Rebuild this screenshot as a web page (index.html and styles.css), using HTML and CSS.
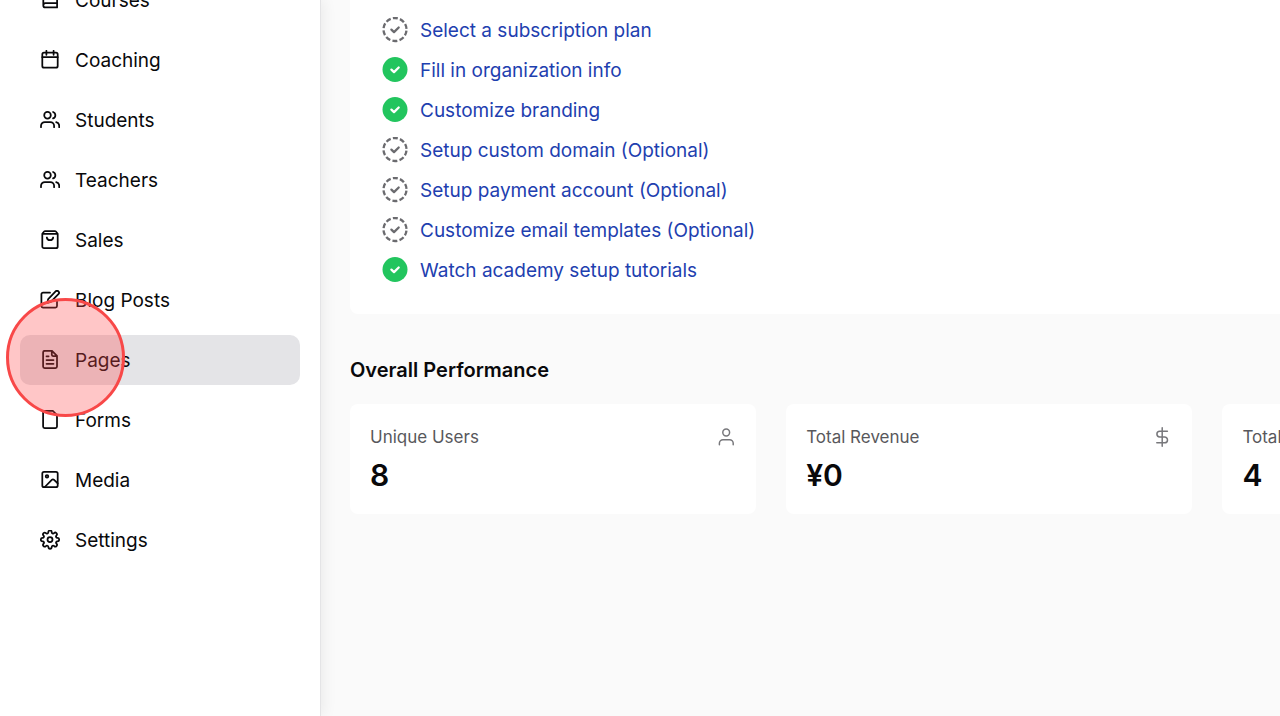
FILE: index.html
```html
<!DOCTYPE html>
<html lang="en">
<head>
<meta charset="utf-8">
<title>Dashboard</title>
<link rel="stylesheet" href="styles.css">
</head>
<body>
<svg class="defs" aria-hidden="true">
  <symbol id="users" viewBox="0 0 20 20"><circle cx="7.500" cy="5.200" r="3.300"/><path d="M1 17.200v-1.400a3.800 3.800 0 0 1 3.800-3.800h5.500a3.800 3.800 0 0 1 3.800 3.800v1.400M13.100 2a3.400 3.400 0 0 1 0 6.400M16.200 12.200c1.900.5 3 1.900 3 3.600v1.400"/></symbol>
  <symbol id="todo" viewBox="0 0 26 26"><circle class="dash" cx="13" cy="12.500" r="11.500"/><path d="M9.400 12.600l2.600 2.500 4.700-4.600"/></symbol>
  <symbol id="done" viewBox="0 0 26 26"><circle class="disc" cx="13" cy="12.500" r="12.500"/><path d="M9.400 12.600l2.600 2.500 4.700-4.600"/></symbol>
</svg>
<div class="app">
  <aside class="sidebar">
    <nav class="nav">
      <a class="nav-item" href="#"><svg class="icon" viewBox="0 0 20 20"><path d="M3.300 15.400V3.500A2 2 0 0 1 5.300 1.500h11.800V17.400H5.300a2 2 0 0 1-2-2 2.200 2.200 0 0 1 2-2.200h11.800"/></svg>Courses</a>
      <a class="nav-item" href="#"><svg class="icon" viewBox="0 0 20 20"><rect x="2.300" y="2.700" width="15.400" height="15" rx="1.700"/><path d="M2.300 7.200h15.400M6.400.8v4M13.600.8v4"/></svg>Coaching</a>
      <a class="nav-item" href="#"><svg class="icon"><use href="#users"/></svg>Students</a>
      <a class="nav-item" href="#"><svg class="icon"><use href="#users"/></svg>Teachers</a>
      <a class="nav-item" href="#"><svg class="icon" viewBox="0 0 20 20"><path d="M2.300 3.700L4.100 1.500a1.400 1.400 0 0 1 1-.5h9.800a1.400 1.400 0 0 1 1 .5l1.800 2.200v12.700a1.700 1.700 0 0 1-1.700 1.700H4a1.700 1.700 0 0 1-1.700-1.700zM2.300 3.900h15.400M6.800 7.500a3.250 3.250 0 0 0 6.400 0"/></svg>Sales</a>
      <a class="nav-item" href="#"><svg class="icon" viewBox="0 0 20 20"><path d="M10 2.700H3A1.600 1.600 0 0 0 1.400 4.300V16A1.600 1.600 0 0 0 3 17.600h12.400A1.600 1.600 0 0 0 17 16V10M15.600 1.400a1.950 1.950 0 0 1 2.800 2.800l-7.600 7.600-3.600 1 1-3.700z"/></svg>Blog Posts</a>
      <a class="nav-item nav-item-active" href="#" aria-current="page"><svg class="icon" viewBox="0 0 20 20"><path d="M12 .8H4.700A1.600 1.600 0 0 0 3.100 2.400V16.400A1.600 1.600 0 0 0 4.700 18h10.700A1.600 1.600 0 0 0 17 16.400V5.800zM11.800.8v4a1.200 1.200 0 0 0 1.200 1.200h4M6.500 6.300h2.100M6.500 10h7M6.500 13.800h7"/></svg>Pages<span class="click-marker"></span></a>
      <a class="nav-item" href="#"><svg class="icon" viewBox="0 0 20 20"><path d="M12.800.8H4.700A1.600 1.600 0 0 0 3.100 2.400V16.400A1.600 1.600 0 0 0 4.700 18h10.700A1.600 1.600 0 0 0 17 16.400V5z"/></svg>Forms</a>
      <a class="nav-item" href="#"><svg class="icon" viewBox="0 0 20 20"><rect x="2.300" y="1.900" width="15.400" height="15.200" rx="1.700"/><circle cx="7" cy="6.300" r="1.300"/><path d="M4.800 17l7-7.200a1.600 1.600 0 0 1 2.300 0l3.600 3.600"/></svg>Media</a>
      <a class="nav-item" href="#"><svg class="icon" viewBox="0 0 24 24"><g stroke-width="2.100"><circle cx="12" cy="11.500" r="3"/><path transform="translate(0 -.5)" d="M19.400 15a1.650 1.650 0 0 0 .33 1.820l.06.06a2 2 0 0 1-2.830 2.830l-.06-.06a1.650 1.650 0 0 0-1.820-.33 1.650 1.650 0 0 0-1 1.510V21a2 2 0 0 1-4 0v-.09A1.650 1.650 0 0 0 9 19.400a1.650 1.650 0 0 0-1.820.33l-.06.06a2 2 0 0 1-2.830-2.830l.06-.06a1.650 1.650 0 0 0 .33-1.820 1.650 1.650 0 0 0-1.510-1H3a2 2 0 0 1 0-4h.09A1.650 1.650 0 0 0 4.600 9a1.650 1.650 0 0 0-.33-1.820l-.06-.06a2 2 0 0 1 2.830-2.830l.06.06a1.650 1.650 0 0 0 1.820.33H9a1.650 1.650 0 0 0 1-1.510V3a2 2 0 0 1 4 0v.09a1.650 1.650 0 0 0 1 1.510 1.650 1.650 0 0 0 1.820-.33l.06-.06a2 2 0 0 1 2.830 2.830l-.06.06a1.650 1.650 0 0 0-.33 1.820V9a1.650 1.650 0 0 0 1.510 1H21a2 2 0 0 1 0 4h-.09a1.650 1.650 0 0 0-1.510 1z"/></g></svg>Settings</a>
    </nav>
  </aside>
  <main class="main">
    <section class="checklist">
      <a class="task" href="#"><svg class="task-icon"><use href="#todo"/></svg>Select a subscription plan</a>
      <a class="task" href="#"><svg class="task-icon task-done"><use href="#done"/></svg>Fill in organization info</a>
      <a class="task" href="#"><svg class="task-icon task-done"><use href="#done"/></svg>Customize branding</a>
      <a class="task" href="#"><svg class="task-icon"><use href="#todo"/></svg>Setup custom domain (Optional)</a>
      <a class="task" href="#"><svg class="task-icon"><use href="#todo"/></svg>Setup payment account (Optional)</a>
      <a class="task" href="#"><svg class="task-icon"><use href="#todo"/></svg>Customize email templates (Optional)</a>
      <a class="task" href="#"><svg class="task-icon task-done"><use href="#done"/></svg>Watch academy setup tutorials</a>
    </section>
    <h2 class="heading">Overall Performance</h2>
    <section class="stats">
      <article class="stat">
        <div class="stat-head">Unique Users<svg class="icon" viewBox="0 0 20 20"><circle cx="10.200" cy="5.500" r="3.400"/><path d="M3.400 17.700v-1.400a3.600 3.600 0 0 1 3.600-3.600h6.600a3.600 3.600 0 0 1 3.600 3.600v1.400"/></svg></div>
        <div class="stat-value">8</div>
      </article>
      <article class="stat">
        <div class="stat-head">Total Revenue<svg class="icon" viewBox="0 0 20 20"><path d="M10.200.8v18.400M15.400 4.200H7.800a2.900 2.900 0 0 0 0 5.800h4.800a2.900 2.900 0 0 1 0 5.800H4.800"/></svg></div>
        <div class="stat-value">¥0</div>
      </article>
      <article class="stat">
        <div class="stat-head">Total Sales</div>
        <div class="stat-value">4</div>
      </article>
    </section>
  </main>
</div>
</body>
</html>
```
FILE: styles.css
```css
* { box-sizing: border-box; }

body {
  margin: 0;
  font-family: Inter, "Liberation Sans", sans-serif;
  font-size: 19px;
  color: #09090b;
  background: #fafafa;
}

.defs { position: absolute; width: 0; height: 0; }

.app { display: flex; height: 100vh; overflow: hidden; }

.sidebar {
  flex: 0 0 320px;
  padding: 0 20px;
  background: #fff;
  box-shadow: 1px 0 0 #e4e4e6, 3px 0 14px rgba(0, 0, 0, 0.07);
}

.nav { display: flex; flex-direction: column; gap: 10px; margin-top: -25px; }

.nav-item {
  position: relative;
  display: flex;
  align-items: center;
  gap: 15px;
  height: 50px;
  padding: 0 20px;
  border-radius: 10px;
  color: inherit;
  text-decoration: none;
}

.nav-item-active { background: #e4e4e7; z-index: 1; }

.icon {
  width: 20px;
  height: 20px;
  flex: none;
  fill: none;
  stroke: currentColor;
  stroke-width: 1.75;
  stroke-linecap: round;
  stroke-linejoin: round;
}

.click-marker {
  position: absolute;
  left: -14px;
  top: -37px;
  width: 119px;
  height: 119px;
  border: 3px solid #f84848;
  border-radius: 50%;
  background: rgba(255, 70, 75, 0.31);
}

.main { flex: 1; min-width: 0; padding-left: 30px; overflow: hidden; }

.checklist {
  padding: 10px 32px 24px;
  background: #fff;
  border-radius: 0 0 0 8px;
}

.task {
  display: flex;
  align-items: center;
  gap: 12px;
  height: 40px;
  color: #1e40af;
  text-decoration: none;
}

.task-icon {
  width: 26px;
  height: 26px;
  fill: none;
  stroke: #6b6b6f;
  stroke-width: 2.3;
  stroke-linecap: round;
  stroke-linejoin: round;
}

.dash { stroke-linecap: butt; stroke-dasharray: 5 2.226; stroke-dashoffset: -1.1; }
.disc { fill: #22c55e; stroke: none; }
.task-done { stroke: #fff; }

.heading { margin: 41px 0 19px; font-size: 20px; line-height: 30px; font-weight: 600; }

.stats { display: grid; grid-auto-flow: column; grid-auto-columns: calc(44% - 3px); gap: 30px; }

.stat { padding: 20px; background: #fff; border-radius: 8px; }

.stat-head {
  display: flex;
  justify-content: space-between;
  align-items: center;
  margin-bottom: 6px;
  font-size: 17px;
  line-height: 26px;
  color: #58585c;
  white-space: nowrap;
}

.stat-head .icon { stroke: #77777b; stroke-width: 1.5; }

.stat-value { font-size: 30px; line-height: 38px; font-weight: 600; }
```
